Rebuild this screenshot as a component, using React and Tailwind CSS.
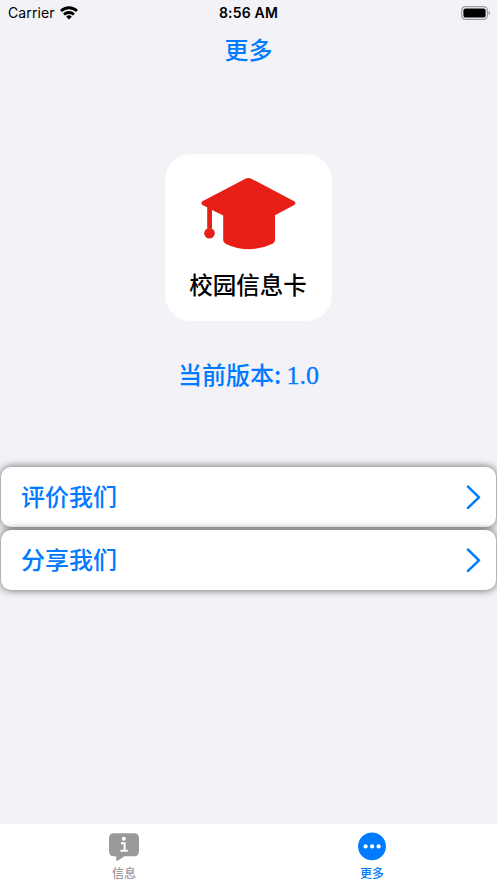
const TABS = [
    { key: "info", label: "信息", icon: InfoIcon, color: "text-[#999999]" },
    { key: "more", label: "更多", icon: MoreIcon, color: "text-[#007aff]" },
];

const ROWS = ["评价我们", "分享我们"];

function WifiIcon() {
    return (
        <svg width="18" height="14" viewBox="0 0 18 14" fill="none" stroke="#000" strokeWidth="2.8">
            <path d="M1 5a11.5 11.5 0 0 1 16 0" />
            <path d="M4 8.5a7.3 7.3 0 0 1 10 0" />
            <path d="M9 13.4 6.2 10.7a4 4 0 0 1 5.6 0z" fill="#000" stroke="none" />
        </svg>
    );
}

function BatteryIcon() {
    return (
        <svg width="30" height="14" viewBox="0 0 30 14">
            <rect x="0.7" y="0.7" width="25.6" height="12.6" rx="3.6" fill="none" stroke="#9b9b9e" strokeWidth="1.2" />
            <rect x="2.4" y="2.4" width="22.2" height="9.2" rx="2.2" />
            <path d="M27.6 4.8c1.9.7 1.9 3.7 0 4.4z" fill="#9b9b9e" />
        </svg>
    );
}

function CapIcon() {
    return (
        <svg width="96" height="73" viewBox="0.8 0 96 73" fill="#e71f17">
            <path d="M45.2 1.7Q48.2 0.2 51.2 1.7L94 24.3Q96.6 26.1 94 27.9L74.8 38.2V63Q74.8 65.6 72.4 66.7Q61 72.2 49 72.2Q37 72.2 25.6 66.9Q23 65.8 23 63V38.6L11.8 32.9V51.5H7V30.3L2.2 27.9Q0.2 26.1 2.2 24.3Z" />
            <circle cx="9.3" cy="56.2" r="5.3" />
        </svg>
    );
}

function InfoIcon() {
    return (
        <svg width="30" height="29" viewBox="0 0 30 29" fill="currentColor">
            <path d="M5 1.3H25Q30 1.3 30 6.3V19.3Q30 24.3 25 24.3H15.3L9.2 28.5Q7.2 29.5 7.2 27.3V24.3H5Q0 24.3 0 19.3V6.3Q0 1.3 5 1.3Z" />
            <circle cx="14.8" cy="6.8" r="2" fill="#fff" />
            <path d="M11.9 11.2H15.6V18.8M11.4 18.8H18.8" fill="none" stroke="#fff" strokeWidth="2" />
        </svg>
    );
}

function MoreIcon() {
    return (
        <svg width="28" height="29" viewBox="0 0 28 29">
            <circle cx="14" cy="14.4" r="13.9" fill="currentColor" />
            <g fill="#fff">
                <circle cx="7.6" cy="14.4" r="2.1" />
                <circle cx="14.1" cy="14.4" r="2.1" />
                <circle cx="20.6" cy="14.4" r="2.1" />
            </g>
        </svg>
    );
}

function StatusBar() {
    return (
        <div className="grid h-[25px] grid-cols-3 items-center px-[6px] font-['Inter','Liberation_Sans',sans-serif] text-black">
            <div className="flex items-center gap-[5px] pl-[2px] text-[14px] leading-[25px]">
                <span className="tracking-[0.1px]">Carrier</span>
                <WifiIcon />
            </div>
            <span className="text-center text-[14px] font-semibold leading-[25px] tracking-[0.2px]">8:56 AM</span>
            <div className="flex justify-end">
                <BatteryIcon />
            </div>
        </div>
    );
}

function Row({ label }) {
    return (
        <button className="flex h-[60px] w-full items-center justify-between rounded-[10px] bg-white pl-[20px] pr-[15px] shadow-[0_0_8px_rgba(0,0,0,0.6)]">
            <span className="pb-[2px] text-[24px] font-medium leading-[58px]">{label}</span>
            <svg width="15" height="24" viewBox="0 0 15 24" fill="none" stroke="currentColor" strokeWidth="2.5" strokeLinecap="round" strokeLinejoin="round">
                <path d="M2 1.7 13 12.3 2 22.9" />
            </svg>
        </button>
    );
}

export default function App() {
    return (
        <div className="flex h-[883px] w-[497px] flex-col overflow-hidden bg-[#f2f2f7] font-['Noto_Sans_CJK_SC',sans-serif] text-[#007aff]">
            <StatusBar />
            <h1 className="h-[48px] text-center text-[24px] font-medium leading-[47px]">更多</h1>

            {/* App logo */}
            <div className="mx-auto mt-[81px] flex h-[167px] w-[167px] shrink-0 flex-col items-center rounded-[26px] bg-white pt-[23px]">
                <CapIcon />
                <span className="mt-[14px] pr-px text-[23.5px] font-medium leading-[40px] text-black">校园信息卡</span>
            </div>

            <p className="mt-[33px] h-[40px] text-center text-[24px] font-medium leading-[40px]">
                当前版本: <span className="font-['Liberation_Serif',serif] text-[26px] font-normal leading-none [-webkit-text-stroke:0.3px_#007aff]">1.0</span>
            </p>

            <div className="mt-[73px] flex flex-col gap-[3px] pl-px pr-px">
                {ROWS.map((label) => (
                    <Row key={label} label={label} />
                ))}
            </div>

            {/* Tab bar */}
            <nav className="mt-auto grid h-[59px] grid-cols-2 bg-white pr-px">
                {TABS.map(({ key, label, icon: Icon, color }) => (
                    <button key={key} className={`flex flex-col items-center pt-[8px] ${color}`}>
                        <Icon />
                        <span className="mt-[3px] text-[12px] font-medium leading-[18px]">{label}</span>
                    </button>
                ))}
            </nav>
        </div>
    );
}
